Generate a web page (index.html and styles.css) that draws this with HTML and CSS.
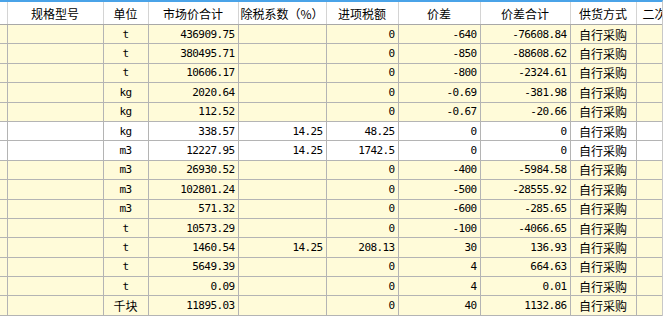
FILE: index.html
```html
<!DOCTYPE html>
<html lang="zh-CN">
<head>
    <meta charset="UTF-8">
    <meta name="viewport" content="width=device-width, initial-scale=1.0">
    <title>价差明细</title>
    <link rel="stylesheet" href="styles.css">
</head>
<body>

<div class="grid">
    <table class="sheet">
        <colgroup>
            <col class="c-gap">
            <col class="c-spec">
            <col class="c-unit">
            <col class="c-money">
            <col class="c-rate">
            <col class="c-tax">
            <col class="c-diff">
            <col class="c-sum">
            <col class="c-way">
            <col class="c-more">
        </colgroup>
        <thead>
            <tr>
                <th></th>
                <th>规格型号</th>
                <th>单位</th>
                <th>市场价合计</th>
                <th>除税系数（%）</th>
                <th>进项税额</th>
                <th>价差</th>
                <th>价差合计</th>
                <th>供货方式</th>
                <th class="cut">二次</th>
            </tr>
        </thead>
        <tbody>
            <tr><td></td><td></td><td class="unit">t</td><td class="num">436909.75</td><td class="num"></td><td class="num">0</td><td class="num">-640</td><td class="num">-76608.84</td><td class="way">自行采购</td><td></td></tr>
            <tr><td></td><td></td><td class="unit">t</td><td class="num">380495.71</td><td class="num"></td><td class="num">0</td><td class="num">-850</td><td class="num">-88608.62</td><td class="way">自行采购</td><td></td></tr>
            <tr><td></td><td></td><td class="unit">t</td><td class="num">10606.17</td><td class="num"></td><td class="num">0</td><td class="num">-800</td><td class="num">-2324.61</td><td class="way">自行采购</td><td></td></tr>
            <tr><td></td><td></td><td class="unit">kg</td><td class="num">2020.64</td><td class="num"></td><td class="num">0</td><td class="num">-0.69</td><td class="num">-381.98</td><td class="way">自行采购</td><td></td></tr>
            <tr><td></td><td></td><td class="unit">kg</td><td class="num">112.52</td><td class="num"></td><td class="num">0</td><td class="num">-0.67</td><td class="num">-20.66</td><td class="way">自行采购</td><td></td></tr>
            <tr class="plain"><td></td><td></td><td class="unit">kg</td><td class="num">338.57</td><td class="num">14.25</td><td class="num">48.25</td><td class="num">0</td><td class="num">0</td><td class="way">自行采购</td><td></td></tr>
            <tr class="plain"><td></td><td></td><td class="unit">m3</td><td class="num">12227.95</td><td class="num">14.25</td><td class="num">1742.5</td><td class="num">0</td><td class="num">0</td><td class="way">自行采购</td><td></td></tr>
            <tr><td></td><td></td><td class="unit">m3</td><td class="num">26930.52</td><td class="num"></td><td class="num">0</td><td class="num">-400</td><td class="num">-5984.58</td><td class="way">自行采购</td><td></td></tr>
            <tr><td></td><td></td><td class="unit">m3</td><td class="num">102801.24</td><td class="num"></td><td class="num">0</td><td class="num">-500</td><td class="num">-28555.92</td><td class="way">自行采购</td><td></td></tr>
            <tr><td></td><td></td><td class="unit">m3</td><td class="num">571.32</td><td class="num"></td><td class="num">0</td><td class="num">-600</td><td class="num">-285.65</td><td class="way">自行采购</td><td></td></tr>
            <tr><td></td><td></td><td class="unit">t</td><td class="num">10573.29</td><td class="num"></td><td class="num">0</td><td class="num">-100</td><td class="num">-4066.65</td><td class="way">自行采购</td><td></td></tr>
            <tr><td></td><td></td><td class="unit">t</td><td class="num">1460.54</td><td class="num">14.25</td><td class="num">208.13</td><td class="num">30</td><td class="num">136.93</td><td class="way">自行采购</td><td></td></tr>
            <tr><td></td><td></td><td class="unit">t</td><td class="num">5649.39</td><td class="num"></td><td class="num">0</td><td class="num">4</td><td class="num">664.63</td><td class="way">自行采购</td><td></td></tr>
            <tr><td></td><td></td><td class="unit">t</td><td class="num">0.09</td><td class="num"></td><td class="num">0</td><td class="num">4</td><td class="num">0.01</td><td class="way">自行采购</td><td></td></tr>
            <tr><td></td><td></td><td class="unit cn">千块</td><td class="num">11895.03</td><td class="num"></td><td class="num">0</td><td class="num">40</td><td class="num">1132.86</td><td class="way">自行采购</td><td></td></tr>
        </tbody>
    </table>
</div>

</body>
</html>
```

FILE: styles.css
```css
html, body {
    margin: 0;
    padding: 0;
    background-color: #ffffff;
}

body {
    width: 665px;
    height: 317px;
    overflow: hidden;
    font-family: "Noto Sans CJK SC", sans-serif;
    color: #000;
}

.grid {
    border-top: 2px solid #4aa3e8;
    width: 662px;
    border-right: 1px solid #c8c8c8;
    overflow: hidden;
}

.sheet {
    table-layout: fixed;
    border-collapse: collapse;
    width: 662px;
}

.c-gap { width: 7px; }
.c-spec { width: 96px; }
.c-unit { width: 45px; }
.c-money { width: 90px; }
.c-rate { width: 88px; }
.c-tax { width: 72px; }
.c-diff { width: 82px; }
.c-sum { width: 90px; }
.c-way { width: 66px; }
.c-more { width: 26px; }

.sheet th {
    height: 22px;
    padding: 0;
    font-size: 12px;
    font-weight: normal;
    text-align: center;
    white-space: nowrap;
    overflow: hidden;
    background-color: #ffffff;
    border-left: 1px solid #d4d4d4;
    border-right: 1px solid #d4d4d4;
    border-bottom: 1px solid #a8a8a8;
}

.sheet th:first-child {
    border-left: none;
}

.sheet th.cut {
    text-align: left;
    padding-left: 6px;
}

.sheet td {
    height: 18.4px;
    padding: 0 3px 0 0;
    background-color: #fffbd9;
    border: 1px solid #b4b4b4;
    font-size: 12px;
    white-space: nowrap;
    overflow: hidden;
}

.sheet td:first-child {
    border-left: none;
}

.sheet tr.plain td {
    background-color: #ffffff;
}

.sheet td.num {
    text-align: right;
    font-family: "DejaVu Sans Mono", monospace;
    font-size: 11px;
    letter-spacing: -0.6px;
    padding-right: 3px;
}

.sheet td.unit {
    text-align: center;
    padding: 0;
    font-family: "DejaVu Sans Mono", monospace;
    font-size: 11px;
    letter-spacing: -0.6px;
}

.sheet td.unit.cn {
    font-family: "Noto Sans CJK SC", sans-serif;
    font-size: 12px;
    letter-spacing: 0;
}

.sheet td.way {
    text-align: center;
    padding: 0;
    font-size: 12px;
}
```
